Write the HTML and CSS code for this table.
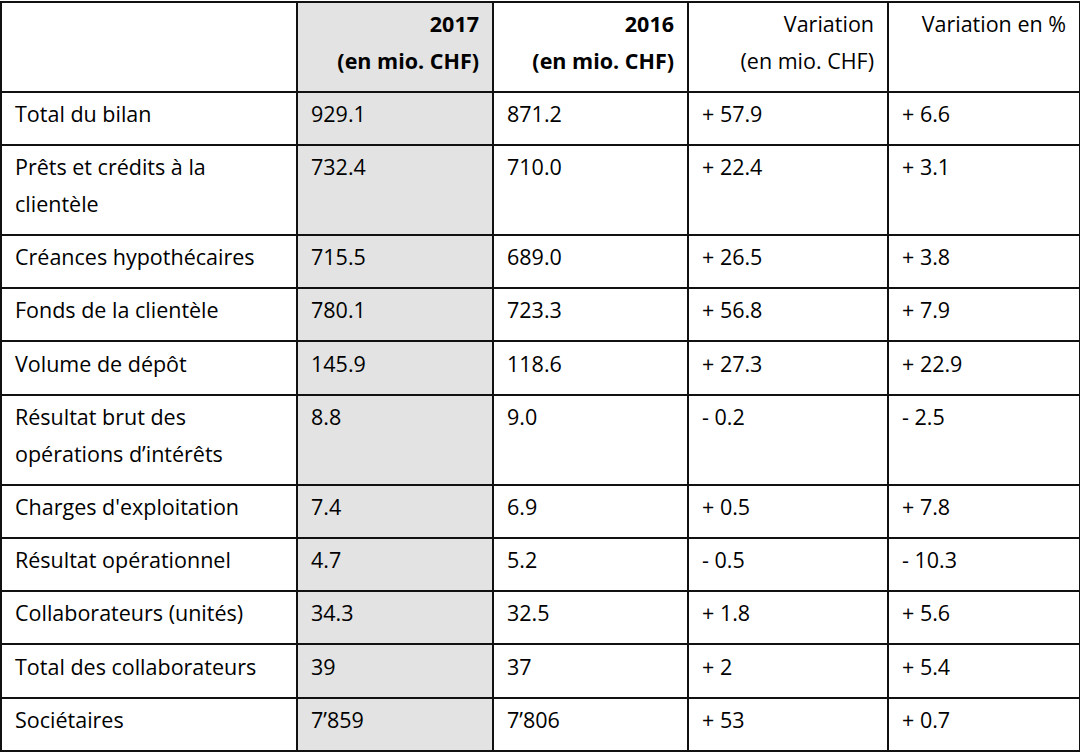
FILE: index.html
```html
<!DOCTYPE html>
<html lang="fr">
<head>
<meta charset="utf-8">
<title>Chiffres clés</title>
<link rel="stylesheet" href="styles.css">
</head>
<body>
<table class="kpi">
  <colgroup>
    <col class="c-label">
    <col class="c-2017">
    <col class="c-2016">
    <col class="c-var">
    <col class="c-pct">
  </colgroup>
  <thead>
    <tr>
      <th class="label"></th>
      <th class="num bold hl">2017<br>(en mio. CHF)</th>
      <th class="num bold">2016<br>(en mio. CHF)</th>
      <th class="num">Variation<br>(en mio. CHF)</th>
      <th class="num">Variation en %</th>
    </tr>
  </thead>
  <tbody>
    <tr><td>Total du bilan</td><td class="hl">929.1</td><td>871.2</td><td>+ 57.9</td><td>+ 6.6</td></tr>
    <tr><td>Prêts et crédits à la<br>clientèle</td><td class="hl">732.4</td><td>710.0</td><td>+ 22.4</td><td>+ 3.1</td></tr>
    <tr><td>Créances hypothécaires</td><td class="hl">715.5</td><td>689.0</td><td>+ 26.5</td><td>+ 3.8</td></tr>
    <tr><td>Fonds de la clientèle</td><td class="hl">780.1</td><td>723.3</td><td>+ 56.8</td><td>+ 7.9</td></tr>
    <tr><td>Volume de dépôt</td><td class="hl">145.9</td><td>118.6</td><td>+ 27.3</td><td>+ 22.9</td></tr>
    <tr><td>Résultat brut des<br>opérations d’intérêts</td><td class="hl">8.8</td><td>9.0</td><td>- 0.2</td><td>- 2.5</td></tr>
    <tr><td>Charges d'exploitation</td><td class="hl">7.4</td><td>6.9</td><td>+ 0.5</td><td>+ 7.8</td></tr>
    <tr><td>Résultat opérationnel</td><td class="hl">4.7</td><td>5.2</td><td>- 0.5</td><td>- 10.3</td></tr>
    <tr><td>Collaborateurs (unités)</td><td class="hl">34.3</td><td>32.5</td><td>+ 1.8</td><td>+ 5.6</td></tr>
    <tr><td>Total des collaborateurs</td><td class="hl">39</td><td>37</td><td>+ 2</td><td>+ 5.4</td></tr>
    <tr><td>Sociétaires</td><td class="hl">7’859</td><td>7’806</td><td>+ 53</td><td>+ 0.7</td></tr>
  </tbody>
</table>
</body>
</html>
```
FILE: styles.css
```css
html, body {
  margin: 0;
  padding: 0;
  background: #ffffff;
}

body {
  font-family: "Open Sans", "Liberation Sans", Arial, sans-serif;
  font-size: 21.5px;
  color: #000000;
}

.kpi {
  border-collapse: collapse;
  width: 1079px;
  margin: 1px 0 0 0;
  table-layout: fixed;
}

.c-label { width: 296px; }
.c-2017 { width: 196px; }
.c-2016 { width: 195px; }
.c-var { width: 200px; }
.c-pct { width: 192px; }

.kpi th,
.kpi td {
  border: 2px solid #111111;
  padding: 3.3px 13px 11.5px 13px;
  line-height: 36.5px;
  vertical-align: top;
  text-align: left;
  font-weight: normal;
}

.kpi th.num {
  text-align: right;
}

.kpi th.bold {
  font-weight: bold;
}

.kpi .hl {
  background: #e3e3e3;
}
```
